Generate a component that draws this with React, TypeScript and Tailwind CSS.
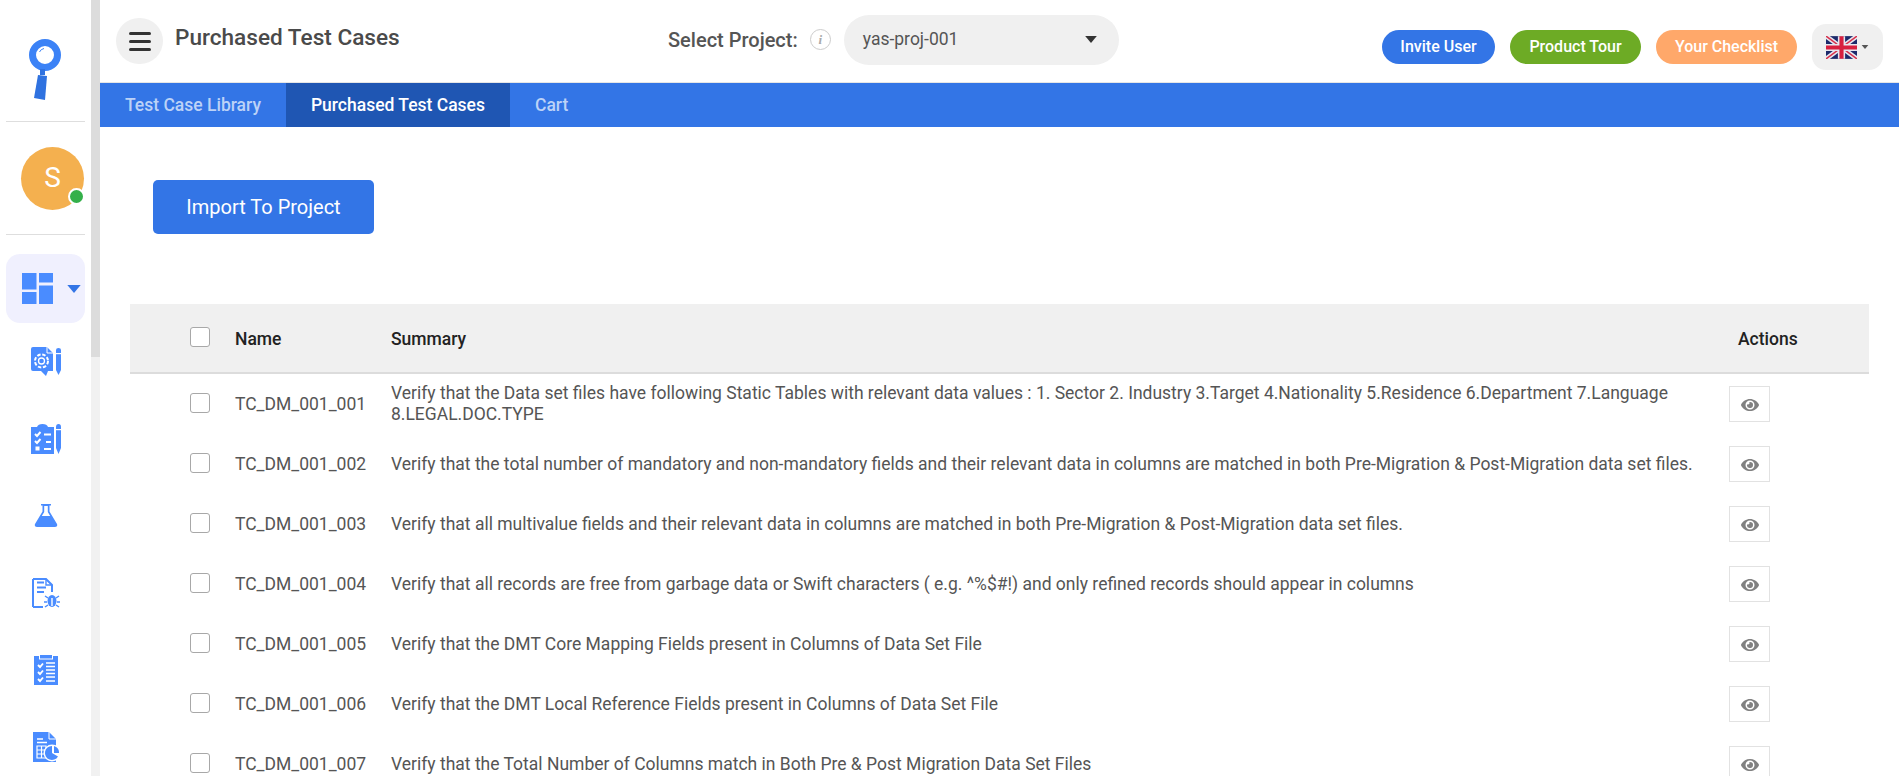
import { FaEye } from 'react-icons/fa';

const rows = [
    {
        name: 'TC_DM_001_001',
        summary:
            'Verify that the Data set files have following Static Tables with relevant data values : 1. Sector 2. Industry 3.Target 4.Nationality 5.Residence 6.Department 7.Language 8.LEGAL.DOC.TYPE',
    },
    {
        name: 'TC_DM_001_002',
        summary:
            'Verify that the total number of mandatory and non-mandatory fields and their relevant data in columns are matched in both Pre-Migration & Post-Migration data set files.',
    },
    {
        name: 'TC_DM_001_003',
        summary:
            'Verify that all multivalue fields and their relevant data in columns are matched in both Pre-Migration & Post-Migration data set files.',
    },
    {
        name: 'TC_DM_001_004',
        summary:
            'Verify that all records are free from garbage data or Swift characters ( e.g. ^%$#!) and only refined records should appear in columns',
    },
    { name: 'TC_DM_001_005', summary: 'Verify that the DMT Core Mapping Fields present in Columns of Data Set File' },
    { name: 'TC_DM_001_006', summary: 'Verify that the DMT Local Reference Fields present in Columns of Data Set File' },
    { name: 'TC_DM_001_007', summary: 'Verify that the Total Number of Columns match in Both Pre & Post Migration Data Set Files' },
];

const Logo = () => (
    <svg width="40" height="72" viewBox="0 0 40 72" fill="none">
        <circle cx="20" cy="19" r="12.5" stroke="#3b82f6" strokeWidth="7" />
        <path d="M14.5 16 A6 6 0 0 1 19 12.5" stroke="#3b82f6" strokeWidth="1" />
        <path d="M15 33 L20 33 L20 39 L15 39 Z" fill="#2f72e0" />
        <path d="M13 39 L22 40 L20 64 L9 62 Z" fill="#2f72e0" />
    </svg>
);

const DashboardIcon = () => (
    <svg width="31" height="31" viewBox="0 0 31 31" fill="#4a8cff">
        <rect x="0" y="0" width="14.5" height="16.5" />
        <rect x="0" y="19" width="14.5" height="12" />
        <rect x="17" y="0" width="14" height="9.5" />
        <rect x="17" y="12.5" width="14" height="18.5" />
    </svg>
);

const GearDocIcon = () => (
    <svg width="30" height="30" viewBox="0 0 30 30" fill="#4a8cff">
        <path d="M2 0 H16 L22 6 V24 H17 L15 29 L10 24 H2 Q0 24 0 22 V2 Q0 0 2 0 Z" />
        <circle cx="10.5" cy="14" r="6.5" fill="none" stroke="#fff" strokeWidth="2" strokeDasharray="3.4 1.7" />
        <circle cx="10.5" cy="14" r="3" fill="none" stroke="#fff" strokeWidth="1.3" />
        <path d="M16 0 V6 H22" fill="none" stroke="#fff" strokeWidth="1" />
        <path d="M25 3 Q25 1 27.5 1 Q30 1 30 3 V23 L27.5 28 L25 23 Z" />
        <rect x="25" y="6" width="5" height="1.2" fill="#fff" />
    </svg>
);

const ChecklistPenIcon = () => (
    <svg width="30" height="30" viewBox="0 0 30 30" fill="#4a8cff">
        <path d="M0 3 H6 Q7 0 11.5 0 Q16 0 17 3 H23 V30 H0 Z" />
        <g fill="none" stroke="#fff" strokeWidth="2">
            <path d="M4 10 L6 12 L9.5 8" />
            <path d="M4 17 L6 19 L9.5 15" />
            <path d="M13 10.5 H20 M15 18 H20 M13 25 H20" />
        </g>
        <rect x="4.5" y="22.5" width="4" height="4" fill="#fff" />
        <path d="M25 3 Q25 0 27.5 0 Q30 0 30 3 V24 L27.5 30 L25 24 Z" />
        <rect x="25" y="5" width="5" height="1.2" fill="#fff" />
    </svg>
);

const FlaskIcon = () => (
    <svg width="24" height="23" viewBox="0 0 24 23" fill="#4a8cff">
        <path d="M7 0 H17 V1.5 H15.5 V7.5 L23 20 Q24 23 21 23 H3 Q0 23 1 20 L8.5 7.5 V1.5 H7 Z" />
        <path d="M10.2 2 H13.8 V8 L16.2 12 H7.8 L10.2 8 Z" fill="#fff" />
    </svg>
);

const DocBugIcon = () => (
    <svg width="28" height="30" viewBox="0 0 28 30" fill="none">
        <path d="M1 1 H14 L20 7 V14 M11 29 H1 Z M1 1 V29" stroke="#4a8cff" strokeWidth="2" />
        <path d="M5 4.5 H12 M5 9.5 H14 M5 14 H12" stroke="#4a8cff" strokeWidth="2" />
        <path d="M14 1 V7 H20" stroke="#4a8cff" strokeWidth="1.4" />
        <ellipse cx="20" cy="23" rx="4.5" ry="6" fill="#4a8cff" />
        <path d="M13 18 L16 20 M27 18 L24 20 M12 24 H15 M28 24 H25 M13 29 L16 27 M27 29 L24 27" stroke="#4a8cff" strokeWidth="1.5" />
        <path d="M20 20 V28" stroke="#fff" strokeWidth="1.4" />
    </svg>
);

const ClipboardCheckIcon = () => (
    <svg width="24" height="30" viewBox="0 0 24 30" fill="#4a8cff">
        <path d="M0 1 H5 V4.5 H19 V1 H24 V30 H0 Z" />
        <rect x="6" y="0" width="12" height="3.5" />
        <g fill="none" stroke="#fff" strokeWidth="1.9">
            <path d="M4 10 L6 12 L9 8.5 M4 17 L6 19 L9 15.5 M4 24 L6 26 L9 22.5" />
        </g>
        <g fill="none" stroke="#fff" strokeWidth="1.4">
            <path d="M12 8 H21 M12 11.5 H21 M12 15 H21 M12 18.5 H21 M12 22 H21 M12 26 H21" />
        </g>
    </svg>
);

const DocPieIcon = () => (
    <svg width="26" height="30" viewBox="0 0 26 30" fill="#4a8cff">
        <path d="M0 0 H16 L23 7 V30 H0 Z" />
        <path d="M16 0 V7 H23" fill="none" stroke="#fff" strokeWidth="1" />
        <path d="M4 7 H10 M4 10.5 H14" stroke="#fff" strokeWidth="1.5" />
        <path d="M4 14 H13 V26 H4 Z M4 18 H13 M4 22 H13 M8.5 14 V26" fill="none" stroke="#fff" strokeWidth="1.2" />
        <circle cx="19" cy="21" r="8.5" fill="#fff" />
        <path d="M19 14 A7 7 0 1 0 25 24.5 L19 21 Z" />
        <path d="M21 14 A7 7 0 0 1 26 21 L21 21 Z" />
    </svg>
);

const UkFlag = () => (
    <svg width="31" height="23" viewBox="0 0 60 44">
        <rect width="60" height="44" fill="#1c2a6b" />
        <path d="M0 0 L60 44 M60 0 L0 44" stroke="#e6e6ee" strokeWidth="9" />
        <path d="M0 0 L60 44 M60 0 L0 44" stroke="#d8304a" strokeWidth="3" />
        <path d="M30 0 V44 M0 22 H60" stroke="#e6e6ee" strokeWidth="14" />
        <path d="M30 0 V44 M0 22 H60" stroke="#d8203f" strokeWidth="8" />
    </svg>
);

const Caret = ({ className, w, h }: { className: string; w: number; h: number }) => (
    <svg width={w} height={h} viewBox="0 0 10 6" className={className}>
        <path d="M0 0 H10 L5 6 Z" fill="currentColor" />
    </svg>
);

const Checkbox = () => <span className="block h-5 w-5 rounded-[3px] border border-[#a8a8a8] bg-white" />;

const sideIcons = [
    <GearDocIcon key="gear" />,
    <ChecklistPenIcon key="checklist" />,
    <FlaskIcon key="flask" />,
    <DocBugIcon key="bug" />,
    <ClipboardCheckIcon key="clipboard" />,
    <DocPieIcon key="pie" />,
];

function Sidebar() {
    return (
        <div className="flex h-full w-[100px] shrink-0">
            <div className="w-[91px] shrink-0 bg-white">
                <div className="mx-[6px] flex h-[122px] items-start justify-center border-b border-[#dedede] pt-[36px] pr-[2px]">
                    <Logo />
                </div>
                <div className="mx-[6px] flex h-[113px] items-center border-b border-[#dedede] pl-[15px]">
                    <div className="relative flex h-[63px] w-[63px] items-center justify-center rounded-full bg-[#f4b04f] text-[28px] text-white">
                        S
                        <span className="absolute right-[-1px] bottom-[5px] h-[17px] w-[17px] rounded-full border-2 border-white bg-[#34b04a]" />
                    </div>
                </div>
                <div className="mx-[6px] mt-[19px] flex h-[69px] items-center rounded-[14px] bg-[#f0f0fe] pl-[16px]">
                    <DashboardIcon />
                    <Caret className="ml-[13px] text-[#3375e6]" w={16} h={8} />
                </div>
                {sideIcons.map((icon, i) => (
                    <div key={i} className="flex h-[77px] items-center justify-center pl-[1px]">
                        {icon}
                    </div>
                ))}
            </div>
            <div className="w-[9px] shrink-0 bg-[#f1f1f1]">
                <div className="h-[357px] bg-[#dcdcdc]" />
            </div>
        </div>
    );
}

function TopBar() {
    return (
        <div className="flex h-[83px] items-center border-b border-[#e6e6e6] bg-white pl-4 pr-4">
            <div className="flex w-[552px] shrink-0 items-center gap-3">
                <button className="flex h-[46px] w-[47px] flex-col items-center justify-center gap-[5px] rounded-full bg-[#f0f0f0]">
                    <span className="h-[3px] w-[22px] rounded-sm bg-[#333]" />
                    <span className="h-[3px] w-[22px] rounded-sm bg-[#333]" />
                    <span className="h-[3px] w-[22px] rounded-sm bg-[#333]" />
                </button>
                <h1 className="mb-[6px] text-[22.6px] font-medium text-[#4a4a4a]">Purchased Test Cases</h1>
            </div>
            <div className="mb-[3px] flex items-center">
                <span className="text-[20px] font-medium text-[#555]">Select Project:</span>
                <span className="ml-[12px] flex h-[21px] w-[21px] items-center justify-center rounded-full border border-[#ccc] font-['Liberation_Serif',serif] text-[13px] font-bold text-[#aaa] italic">
                    i
                </span>
                <div className="ml-[13px] flex h-[50px] w-[275px] items-center justify-between rounded-full bg-[#f0f0f0] pr-[22px] pl-[19px] text-[17.5px] text-[#555]">
                    yas-proj-001
                    <Caret className="text-[#333]" w={12} h={7} />
                </div>
            </div>
            <div className="mt-[12px] ml-auto flex items-center">
                <button className="h-[34px] w-[113px] rounded-full bg-[#3375e6] text-[16px] font-medium text-white">Invite User</button>
                <button className="ml-[15px] h-[34px] w-[131px] rounded-full bg-[#6dab25] text-[16px] font-medium text-white">Product Tour</button>
                <button className="ml-[15px] h-[34px] w-[141px] rounded-full bg-[#ffa86a] text-[16px] font-medium text-white">Your Checklist</button>
                <div className="ml-[15px] flex h-[46px] w-[71px] items-center rounded-[14px] bg-[#f0f0f0] pl-[14px]">
                    <UkFlag />
                    <Caret className="ml-[4px] text-[#555]" w={8} h={4} />
                </div>
            </div>
        </div>
    );
}

function Tabs() {
    return (
        <div className="flex h-[44px] items-center bg-[#3375e6] text-[17.5px] font-medium">
            <div className="flex h-full items-center px-[25px] text-[#bcd2f7]">Test Case Library</div>
            <div className="flex h-full w-[224px] items-center justify-center bg-[#1f56b3] text-white">Purchased Test Cases</div>
            <div className="flex h-full items-center px-[25px] text-[#bcd2f7]">Cart</div>
        </div>
    );
}

function CasesTable() {
    return (
        <div className="mt-[70px] mr-[30px] ml-[30px]">
            <div className="grid h-[70px] grid-cols-[105px_156px_1fr_140px] items-center border-b-2 border-[#dcdcdc] bg-[#f0f0f0] text-[17.5px] font-medium text-[#222]">
                <div className="mb-[3px] pl-[60px]">
                    <Checkbox />
                </div>
                <div className="pt-[2px]">Name</div>
                <div className="pt-[2px]">Summary</div>
                <div className="pt-[2px] pl-[9px]">Actions</div>
            </div>
            {rows.map(row => (
                <div key={row.name} className="grid min-h-[60px] grid-cols-[105px_156px_1fr_140px] items-center text-[17.5px] leading-[21px] text-[#555]">
                    <div className="mb-[3px] pl-[60px]">
                        <Checkbox />
                    </div>
                    <div>{row.name}</div>
                    <div>{row.summary}</div>
                    <div>
                        <button className="flex h-[36px] w-[41px] items-center justify-center border border-[#e2e2e2] bg-white pt-[2px] text-[#808080]">
                            <FaEye className="h-[18px] w-[18px]" />
                        </button>
                    </div>
                </div>
            ))}
        </div>
    );
}

export default function App() {
    return (
        <div className="flex h-screen overflow-hidden bg-white font-['Roboto',sans-serif]">
            <Sidebar />
            <div className="min-w-0 flex-1">
                <TopBar />
                <Tabs />
                <div className="pt-[53px]">
                    <button className="ml-[53px] h-[54px] w-[221px] rounded-[5px] bg-[#3375e6] text-[20px] text-white">Import To Project</button>
                    <CasesTable />
                </div>
            </div>
        </div>
    );
}
